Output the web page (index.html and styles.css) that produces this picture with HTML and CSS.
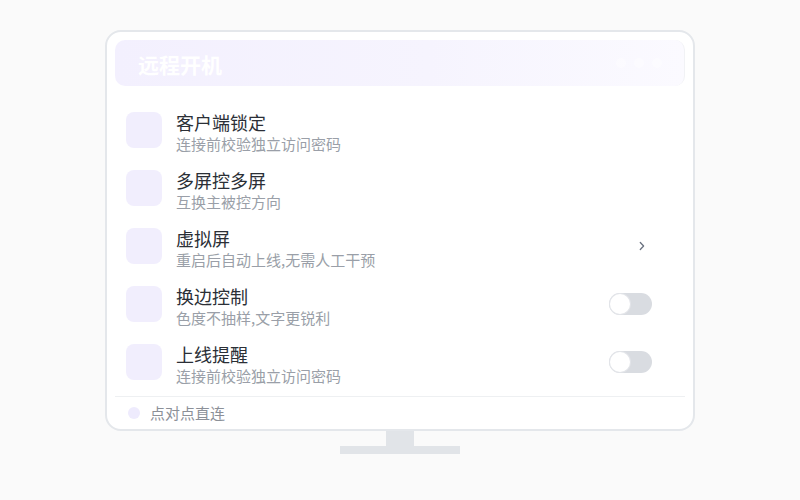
FILE: index.html
```html
<!DOCTYPE html>
<html lang="zh-CN">
<head>
<meta charset="utf-8">
<title>远程开机</title>
<link rel="stylesheet" href="styles.css">
</head>
<body>
<div class="stage">
  <div class="monitor">
    <div class="screen">
      <div class="header">
        <span class="header-title">远程开机</span>
        <span class="header-dots"><i></i><i></i><i></i></span>
      </div>
      <div class="list">
        <div class="row">
          <div class="icon"></div>
          <div class="text">
            <div class="title">客户端锁定</div>
            <div class="sub">连接前校验独立访问密码</div>
          </div>
          <div class="trail"></div>
        </div>
        <div class="row">
          <div class="icon"></div>
          <div class="text">
            <div class="title">多屏控多屏</div>
            <div class="sub">互换主被控方向</div>
          </div>
          <div class="trail"></div>
        </div>
        <div class="row">
          <div class="icon"></div>
          <div class="text">
            <div class="title">虚拟屏</div>
            <div class="sub">重启后自动上线,无需人工干预</div>
          </div>
          <div class="trail">
            <svg class="chev" width="6" height="10" viewBox="0 0 6 10"><path d="M1.3 1.5 L4.6 5 L1.3 8.5" fill="none" stroke="#6b7280" stroke-width="1.3" stroke-linecap="round" stroke-linejoin="round"/></svg>
          </div>
        </div>
        <div class="row">
          <div class="icon"></div>
          <div class="text">
            <div class="title">换边控制</div>
            <div class="sub">色度不抽样,文字更锐利</div>
          </div>
          <div class="trail"><span class="toggle"><span class="knob"></span></span></div>
        </div>
        <div class="row">
          <div class="icon"></div>
          <div class="text">
            <div class="title">上线提醒</div>
            <div class="sub">连接前校验独立访问密码</div>
          </div>
          <div class="trail"><span class="toggle"><span class="knob"></span></span></div>
        </div>
      </div>
      <div class="footer">
        <span class="dot"></span>
        <span class="footer-text">点对点直连</span>
      </div>
    </div>
    <div class="neck"></div>
    <div class="base"></div>
  </div>
</div>
</body>
</html>
```

FILE: styles.css
```css
* { box-sizing: border-box; }
html, body { margin: 0; padding: 0; }
body {
  background: #fafafa;
  font-family: "Noto Sans CJK SC", "Noto Sans", sans-serif;
  width: 800px;
  height: 500px;
  overflow: hidden;
}
.stage {
  padding-top: 30px;
}
.monitor {
  width: 590px;
  margin: 0 auto;
  display: flex;
  flex-direction: column;
  align-items: center;
}
.screen {
  width: 590px;
  background: #ffffff;
  border: 2px solid #e4e7eb;
  border-radius: 16px;
  padding: 8px 8px 0 8px;
}
.header {
  height: 46px;
  border-radius: 10px;
  background: linear-gradient(90deg, #f3f0fe 0%, #f6f4fe 55%, #fbfaff 100%);
  display: flex;
  align-items: center;
  justify-content: space-between;
  padding: 0 22px 0 23px;
  border-right: 1px solid #f1f2f5;
}
.header-title {
  color: #ffffff;
  font-size: 21px;
  font-weight: 700;
  line-height: 26px;
  margin-top: 2px;
}
.header-dots {
  display: flex;
  gap: 8px;
  opacity: 0.4;
}
.header-dots i {
  width: 10px;
  height: 10px;
  border-radius: 50%;
  background: #ffffff;
}
.list {
  margin-top: 15px;
}
.row {
  height: 58px;
  display: flex;
  align-items: center;
  padding: 0 33px 0 11px;
}
.icon {
  width: 36px;
  height: 36px;
  border-radius: 8px;
  background: #f1eefd;
  flex: none;
}
.text {
  flex: 1;
  margin-left: 14px;
  padding-top: 2px;
}
.title {
  font-size: 18px;
  line-height: 24px;
  color: #2b2f36;
}
.sub {
  font-size: 15px;
  line-height: 19px;
  color: #9a9fa8;
}
.trail {
  width: 43px;
  display: flex;
  justify-content: flex-end;
  align-items: center;
}
.chev {
  display: block;
  margin-right: 7px;
}
.toggle {
  width: 43px;
  height: 22px;
  border-radius: 11px;
  background: #d9dce1;
  display: flex;
  align-items: center;
  padding-left: 1px;
}
.knob {
  width: 20px;
  height: 20px;
  border-radius: 50%;
  background: #ffffff;
  box-shadow: 0 0 0 1px #e3e5e9;
}
.footer {
  margin-top: 5px;
  border-top: 1px solid #eef0f2;
  height: 33px;
  display: flex;
  align-items: center;
  padding-left: 13px;
  gap: 10px;
}
.dot {
  width: 12px;
  height: 12px;
  border-radius: 50%;
  background: #eeebfd;
}
.footer-text {
  font-size: 15px;
  line-height: 20px;
  color: #8c9098;
}
.neck {
  width: 28px;
  height: 15px;
  background: #e1e4e8;
}
.base {
  width: 120px;
  height: 8px;
  background: #e1e4e8;
}
```
